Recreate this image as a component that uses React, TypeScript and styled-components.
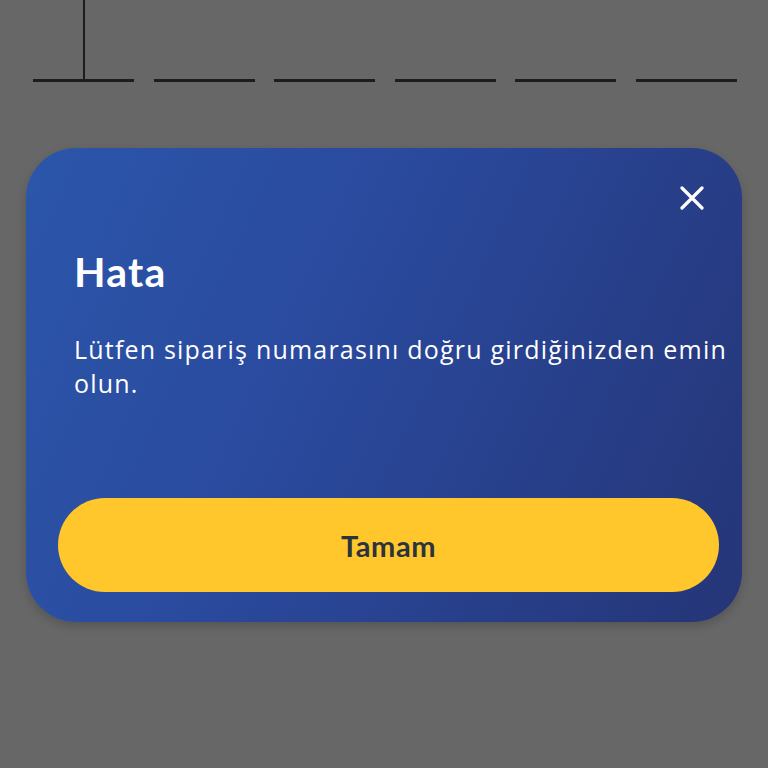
import React from 'react';
import styled, { createGlobalStyle } from 'styled-components';

const GlobalStyle = createGlobalStyle`
  html, body {
    margin: 0;
    padding: 0;
    background: #676767;
    font-family: 'Open Sans', 'Noto Sans', sans-serif;
  }
`;

const Screen = styled.div`
  width: 768px;
  height: 768px;
  overflow: hidden;
  display: flex;
  flex-direction: column;
  align-items: center;
`;

const CodeRow = styled.div`
  display: flex;
  gap: 19.6px;
  margin-left: 2px;
`;

const CodeSlot = styled.div`
  position: relative;
  width: 101px;
  height: 79px;
  border-bottom: 3px solid #1d1d21;
`;

const Caret = styled.span`
  position: absolute;
  left: 50px;
  top: 0;
  bottom: 0;
  width: 2px;
  background: #1d1d21;
`;

const Dialog = styled.div`
  margin-top: 66px;
  width: 716px;
  height: 474px;
  box-sizing: border-box;
  border-radius: 50px;
  background: linear-gradient(115deg, #2b56aa 0%, #2a4a9e 40%, #253577 100%);
  box-shadow: 0 4px 10px rgba(0, 0, 0, 0.18);
  padding: 37px 10px 0 32px;
  display: flex;
  flex-direction: column;
  color: #fff;
`;

const TopBar = styled.div`
  display: flex;
  justify-content: flex-end;
  padding-right: 27px;
`;

const CloseButton = styled.button`
  width: 26px;
  height: 26px;
  padding: 0;
  border: none;
  background: none;
  display: flex;
  align-items: center;
  justify-content: center;
`;

const Title = styled.h2`
  margin: 37px 0 0 16px;
  font-family: 'Lato', 'Open Sans', sans-serif;
  font-size: 41px;
  line-height: 48px;
  font-weight: 700;
  letter-spacing: 1.2px;
`;

const Message = styled.p`
  margin: 36px 0 0 16px;
  font-size: 25px;
  line-height: 34px;
  font-weight: 400;
  letter-spacing: 1.2px;
`;

const PrimaryButton = styled.button`
  margin-top: auto;
  margin-bottom: 30px;
  width: 661px;
  height: 94px;
  border: none;
  border-radius: 47px;
  background: #ffc72c;
  color: #2b333d;
  font-family: 'Lato', 'Open Sans', sans-serif;
  font-size: 29px;
  font-weight: 700;
  letter-spacing: 0.6px;
`;

const CloseIcon = () => (
  <svg width="24" height="24" viewBox="0 0 24 24" fill="none">
    <path d="M2 2 L22 22 M22 2 L2 22" stroke="#fff" strokeWidth="3.2" strokeLinecap="round" />
  </svg>
);

const App: React.FC = () => {
  const slots = [0, 1, 2, 3, 4, 5];
  return (
    <Screen>
      <GlobalStyle />
      <CodeRow>
        {slots.map(i => (
          <CodeSlot key={i}>{i === 0 && <Caret />}</CodeSlot>
        ))}
      </CodeRow>
      <Dialog>
        <TopBar>
          <CloseButton aria-label="Kapat">
            <CloseIcon />
          </CloseButton>
        </TopBar>
        <Title>Hata</Title>
        <Message>Lütfen sipariş numarasını doğru girdiğinizden emin olun.</Message>
        <PrimaryButton>Tamam</PrimaryButton>
      </Dialog>
    </Screen>
  );
};

export default App;
